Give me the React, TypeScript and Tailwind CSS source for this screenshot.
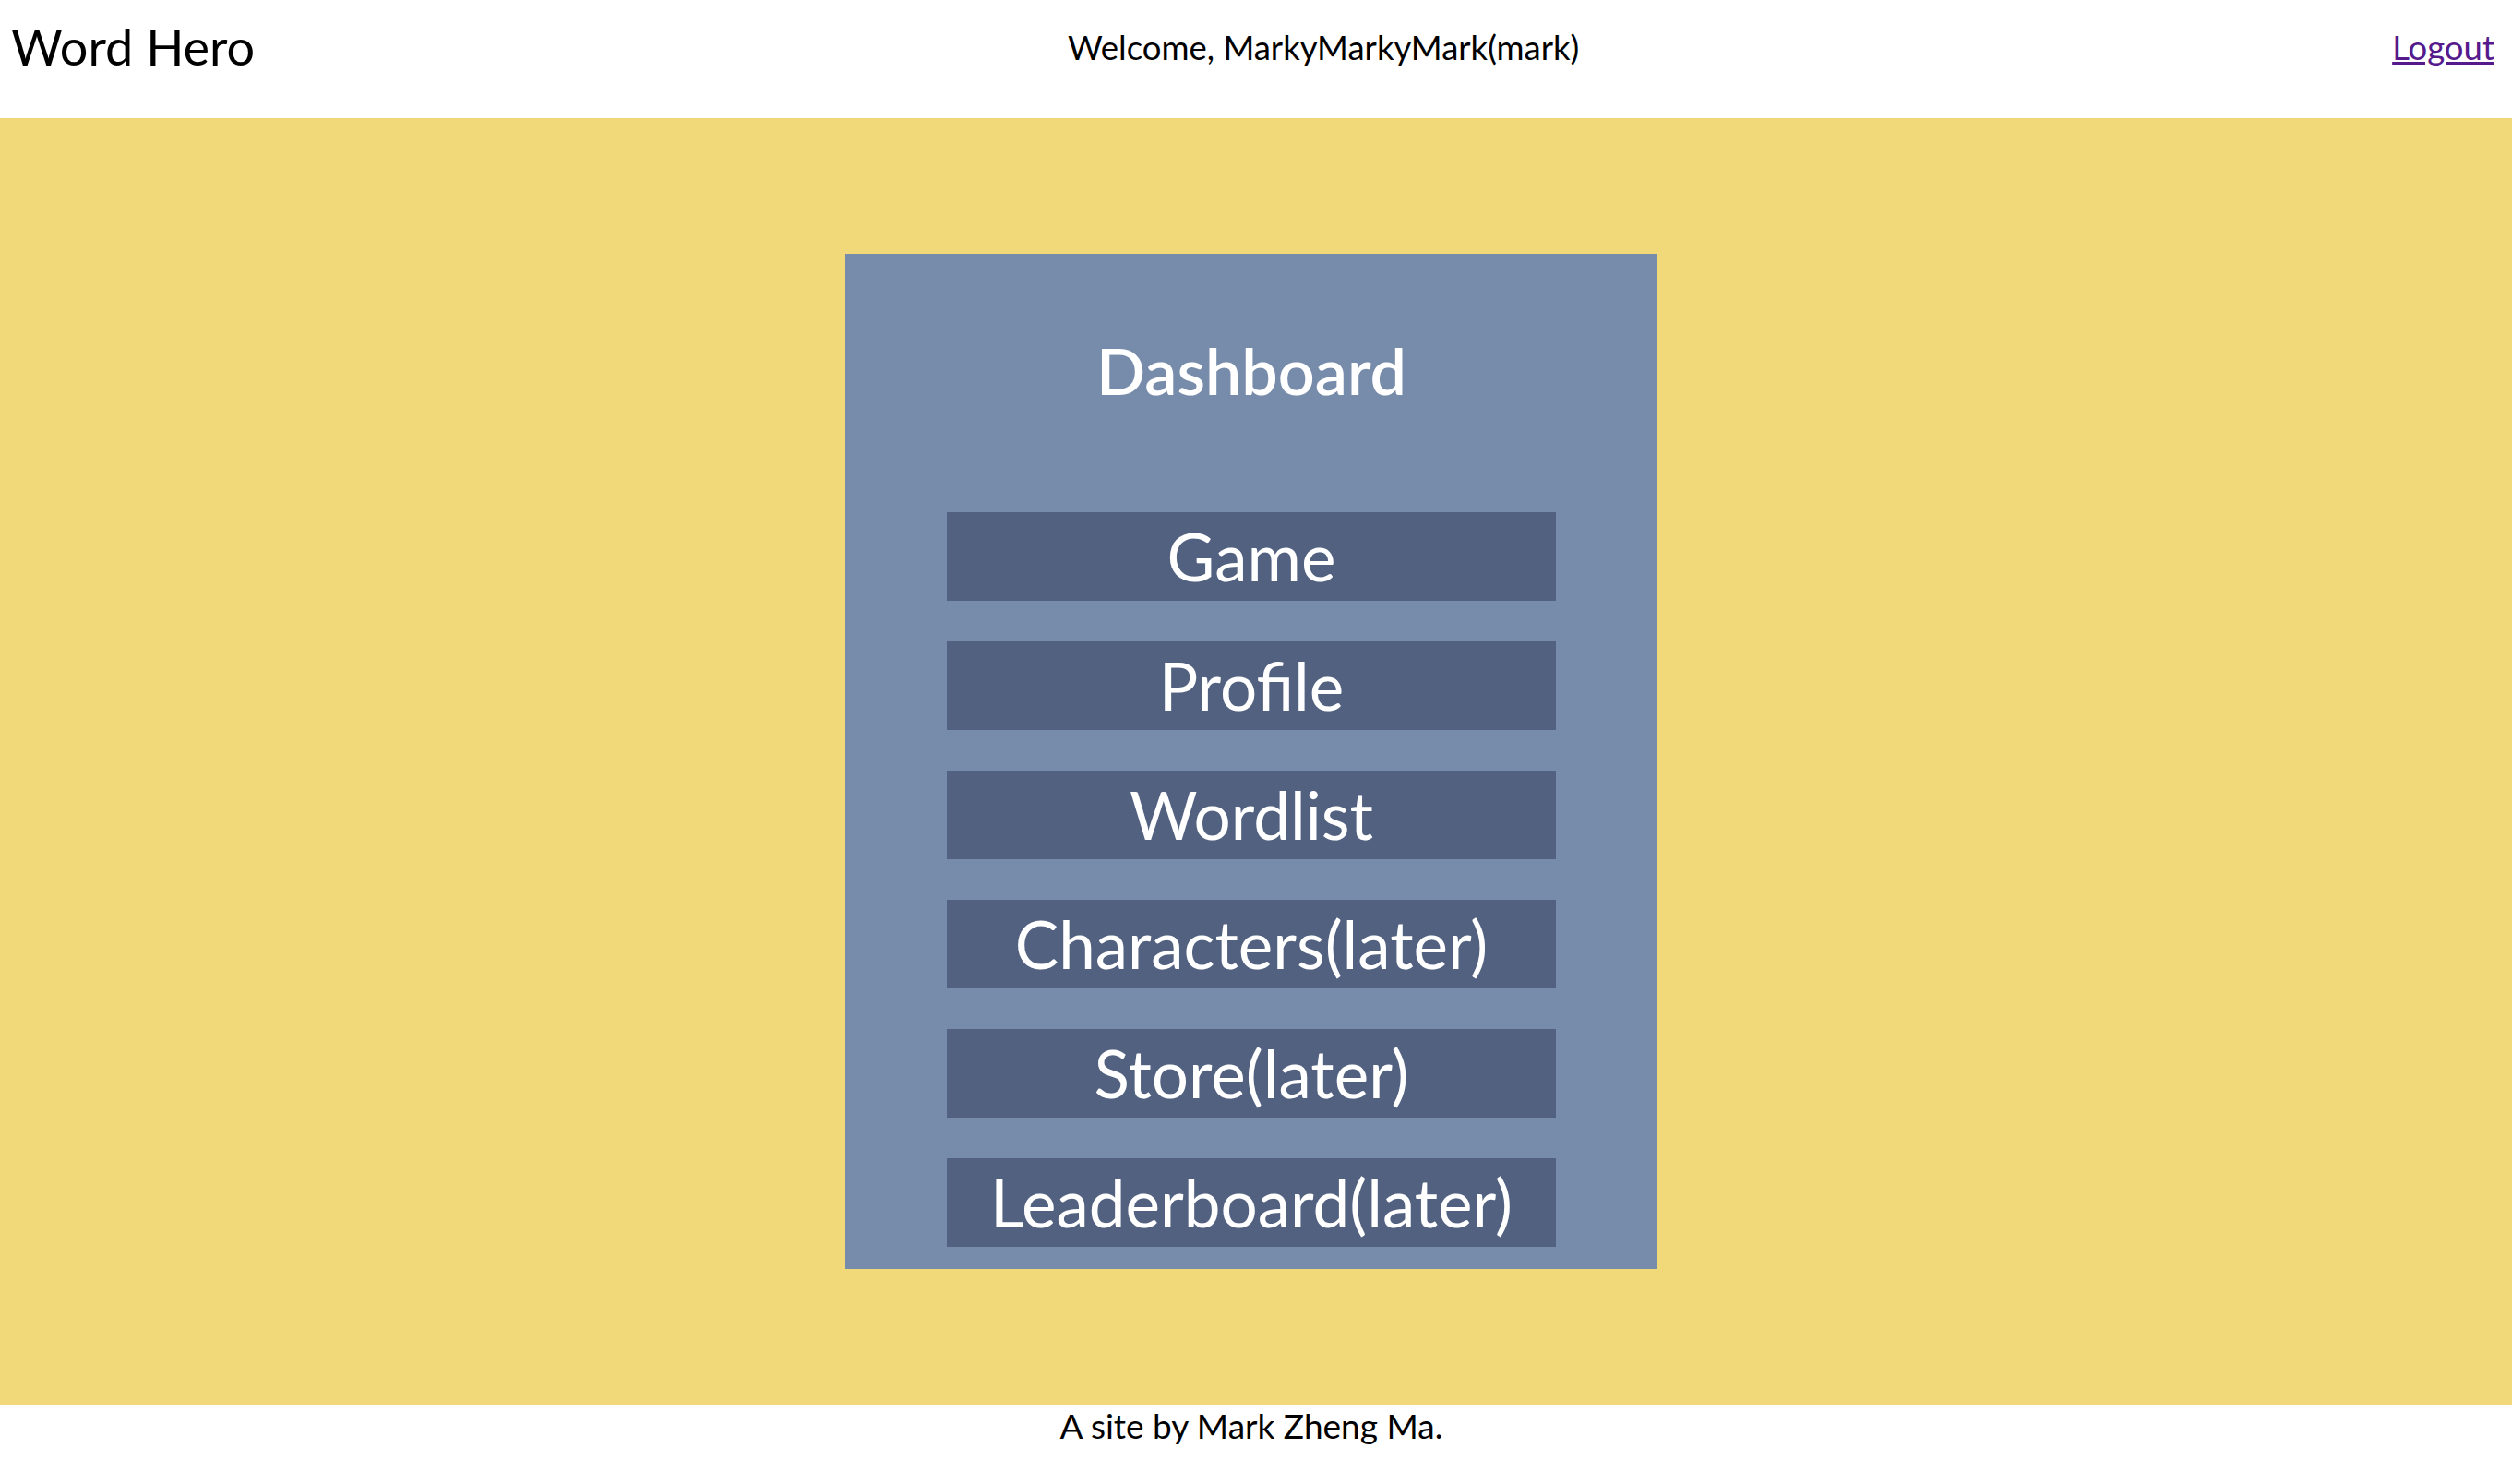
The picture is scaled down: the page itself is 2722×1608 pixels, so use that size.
const links = [
  "Game",
  "Profile",
  "Wordlist",
  "Characters(later)",
  "Store(later)",
  "Leaderboard(later)",
];

const App = () => {
  return (
    <div className="flex flex-col w-full min-h-screen bg-white text-black font-['Lato',sans-serif]">
      <header className="flex justify-between items-center h-[128px] pl-3 pr-[19px] pb-[26px]">
        <h1 className="text-[54px] leading-none">Word Hero</h1>
        <p className="text-[36.5px] leading-none whitespace-nowrap">
          Welcome, MarkyMarkyMark(mark)
        </p>
        <a href="#" className="text-[36.5px] leading-none text-[#551a8b] underline">
          Logout
        </a>
      </header>
      <main className="flex items-center justify-center h-[1394px] pr-[10px] bg-[#f1d97a]">
        <section className="flex flex-col items-center w-[880px] h-[1100px] pt-[83px] bg-[#778baa]">
          <h2 className="text-[70px] font-semibold text-white leading-tight mb-[109px]">
            Dashboard
          </h2>
          <ul className="flex flex-col gap-[44px]">
            {links.map((label) => (
              <li
                key={label}
                className="flex items-center justify-center w-[660px] h-[96px] bg-[#526180] text-white text-[71px] leading-none"
              >
                {label}
              </li>
            ))}
          </ul>
        </section>
      </main>
      <footer className="flex justify-center h-[86px] pr-[10px]">
        <p className="text-[37px] leading-tight">A site by Mark Zheng Ma.</p>
      </footer>
    </div>
  );
};

export default App;
